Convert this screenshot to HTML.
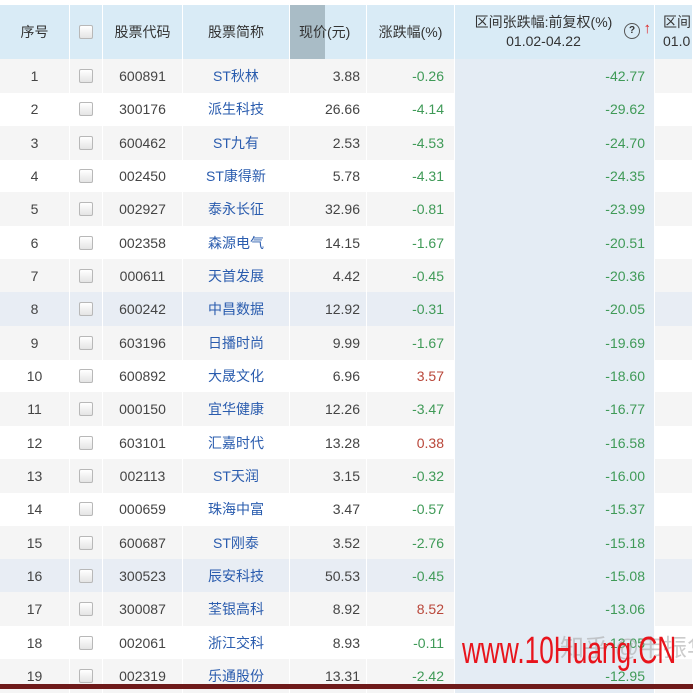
<!DOCTYPE html><html><head><meta charset="utf-8"><style>
body{margin:0;width:693px;height:691px;overflow:hidden;background:#fff;font-family:"Liberation Sans","Noto Sans CJK SC",sans-serif;font-size:14px;color:#444;position:relative}
.r{position:absolute;left:0;width:693px;height:34px;display:flex}
.c{height:100%;display:flex;align-items:center;box-sizing:border-box;border-right:1px solid #fff}
.h .c{justify-content:center;background:#d9ebf6;color:#333;font-size:14px}
.cb{width:12px;height:12px;border:1px solid #b8b8b8;border-radius:2px;background:linear-gradient(#fff,#e4e4e4)}
.w0{width:70px;justify-content:center}.w1{width:33px;justify-content:center}.w2{width:80px;justify-content:center}.w3{width:107px;justify-content:center;color:#2a5cae}.w4{width:77px;justify-content:flex-end;padding-right:6px}.w5{width:88px;justify-content:flex-end;padding-right:10px}.w6{width:200px;justify-content:flex-end;padding-right:9px;background:#e4ecf4;color:#3f9a57}.w7{width:38px}
.g{color:#3f9a57}.rd{color:#b9473a}
.odd{background:#f5f5f5}.hl{background:#e8edf4}
</style></head><body>
<div class="r h" style="top:5px;height:54px">
<div class="c w0">序号</div><div class="c w1"><div class="cb"></div></div><div class="c w2">股票代码</div><div class="c w3" style="color:#333">股票简称</div>
<div class="c w4" style="justify-content:flex-start;padding:0;background:linear-gradient(90deg,#a9bcc6 0 35px,#d9ebf6 35px)"><span style="margin-left:9px">现价(元)</span></div>
<div class="c w5" style="justify-content:center;padding:0">涨跌幅(%)</div>
<div class="c w6" style="background:#d9ebf6;color:#333;flex-direction:column;justify-content:center;padding:0;line-height:19px;position:relative"><span style="margin-left:-22px">区间张跌幅:前复权(%)</span><span style="margin-left:-22px">01.02-04.22</span><span style="position:absolute;right:14px;top:18px;width:14px;height:14px;border:1.5px solid #555;border-radius:50%;font-size:10px;line-height:14px;text-align:center;font-weight:bold">?</span><span style="position:absolute;right:3px;top:14px;color:#d22;font-size:15px">↑</span></div>
<div class="c w7" style="flex-direction:column;align-items:flex-start;padding-left:8px;line-height:19px;justify-content:center;white-space:nowrap;overflow:hidden;color:#333">区间<span>01.0</span></div>
</div>
<div id="rows"></div>
<div style="position:absolute;left:0;top:684px;width:693px;height:5px;background:#6e1a1a"></div>
<div style="position:absolute;left:560px;top:628px;color:rgba(170,170,170,.6);font-size:24px;white-space:nowrap">知乎 @韦振华</div>
<div style="position:absolute;left:462px;top:629px;color:#e8141c;font-size:38px;line-height:44px;white-space:nowrap;transform:scaleX(.69);transform-origin:left">www.10Huang.CN</div>
<script>
var d=[["600891","ST秋林","3.88","-0.26","-42.77"],["300176","派生科技","26.66","-4.14","-29.62"],["600462","ST九有","2.53","-4.53","-24.70"],["002450","ST康得新","5.78","-4.31","-24.35"],["002927","泰永长征","32.96","-0.81","-23.99"],["002358","森源电气","14.15","-1.67","-20.51"],["000611","天首发展","4.42","-0.45","-20.36"],["600242","中昌数据","12.92","-0.31","-20.05"],["603196","日播时尚","9.99","-1.67","-19.69"],["600892","大晟文化","6.96","3.57","-18.60"],["000150","宜华健康","12.26","-3.47","-16.77"],["603101","汇嘉时代","13.28","0.38","-16.58"],["002113","ST天润","3.15","-0.32","-16.00"],["000659","珠海中富","3.47","-0.57","-15.37"],["600687","ST刚泰","3.52","-2.76","-15.18"],["300523","辰安科技","50.53","-0.45","-15.08"],["300087","荃银高科","8.92","8.52","-13.06"],["002061","浙江交科","8.93","-0.11","-13.05"],["002319","乐通股份","13.31","-2.42","-12.95"]];
var h="";d.forEach(function(x,i){var n=i+1,cl=(n==8||n==16)?"hl":(n%2?"odd":"");
h+='<div class="r '+cl+'" style="top:'+(59+i*33.33)+'px"><div class="c w0">'+n+'</div><div class="c w1"><div class="cb"></div></div><div class="c w2">'+x[0]+'</div><div class="c w3">'+x[1]+'</div><div class="c w4">'+x[2]+'</div><div class="c w5 '+(x[3][0]=="-"?"g":"rd")+'">'+x[3]+'</div><div class="c w6">'+x[4]+'</div><div class="c w7"></div></div>';});
document.getElementById("rows").innerHTML=h;
</script>
</body></html>
